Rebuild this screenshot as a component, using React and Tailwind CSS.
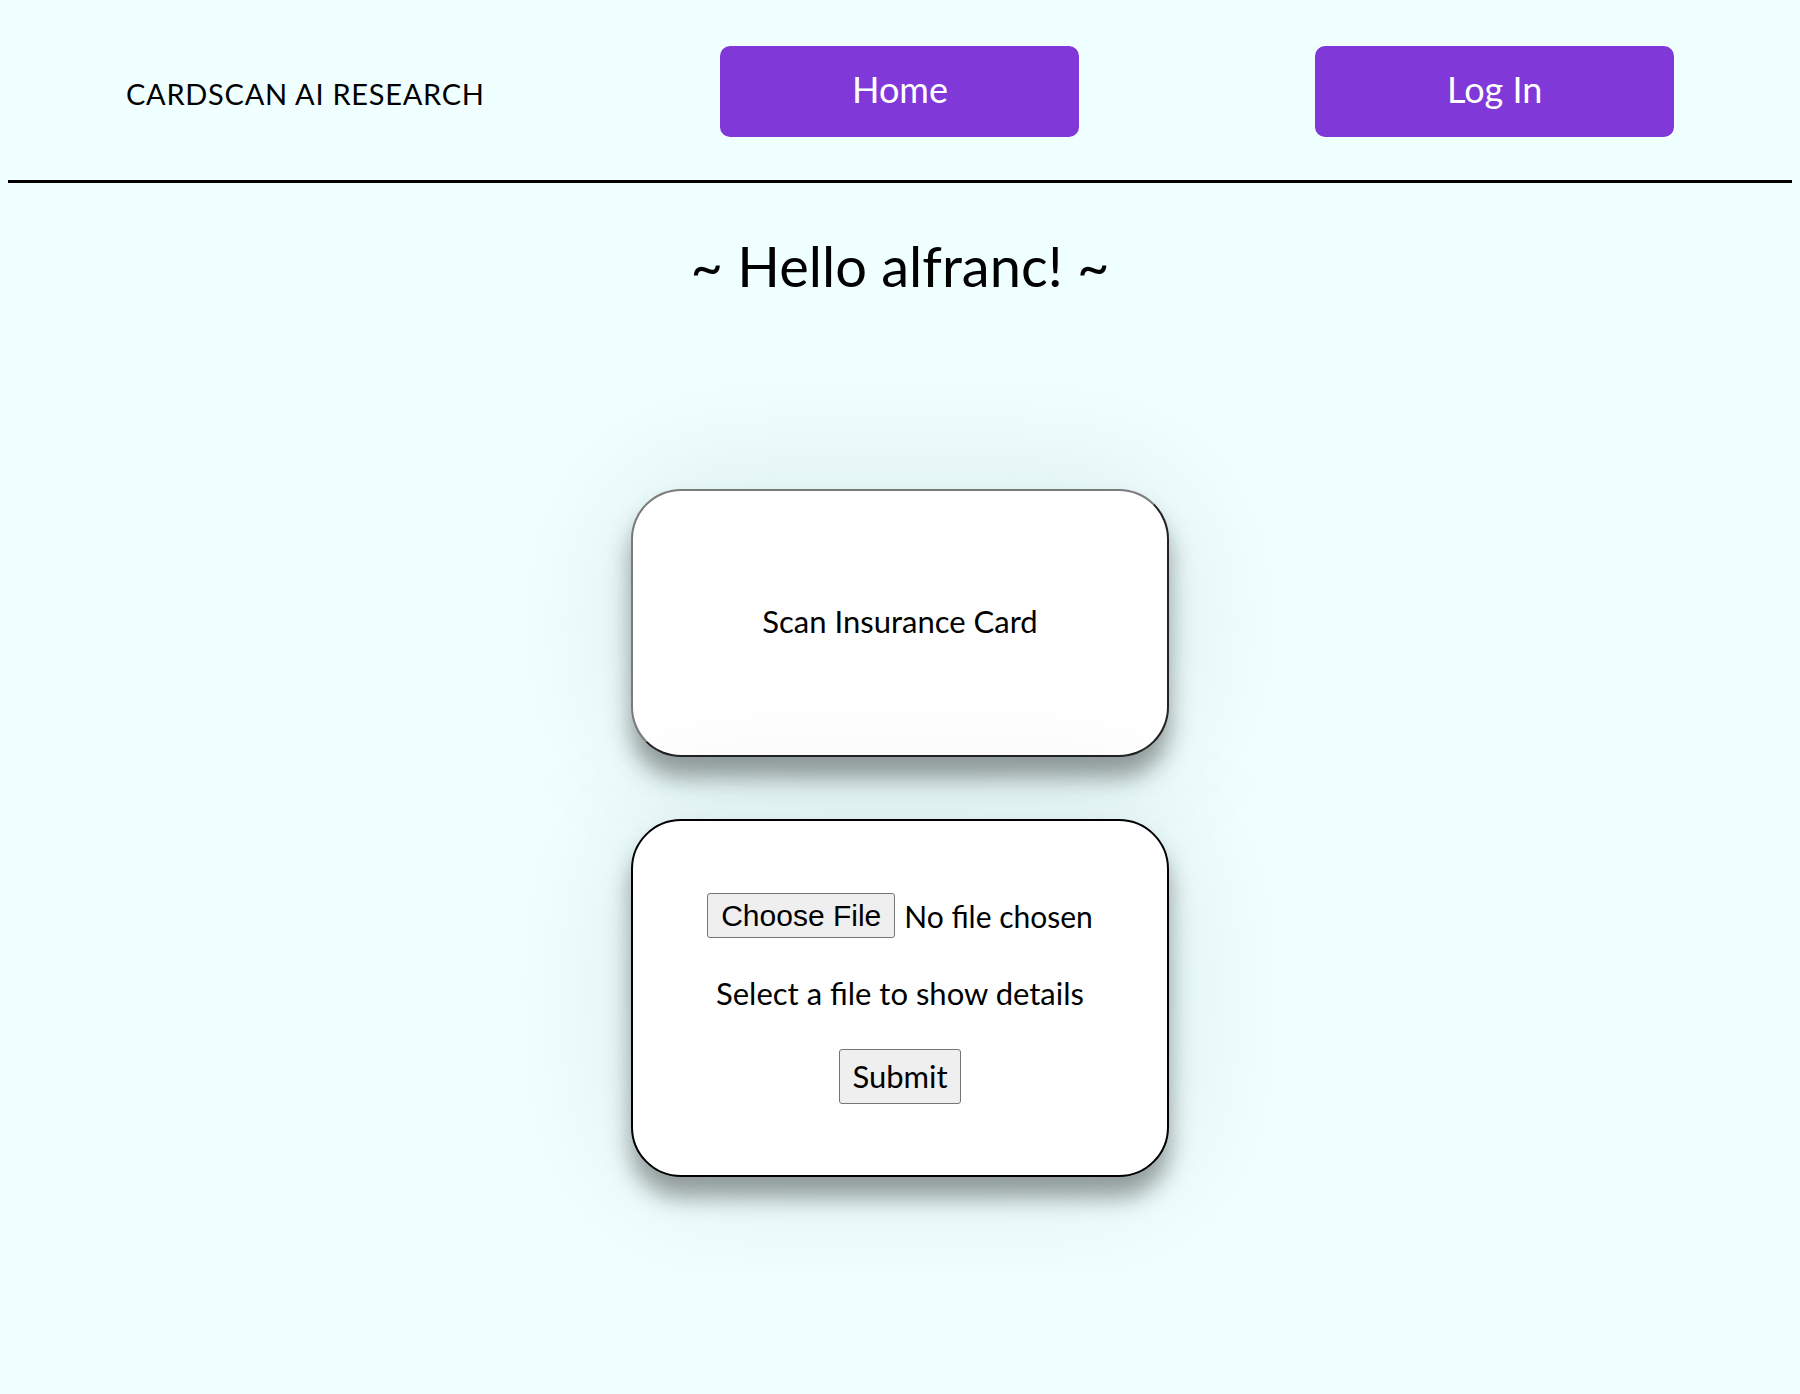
const font = "font-['Lato','Open_Sans',sans-serif]"

function NavButton({ children }) {
  return (
    <div className="flex justify-center">
      <button className="flex h-[91px] w-[359px] items-center justify-center rounded-[10px] bg-[#8038d9] pb-[6px] text-[36px] leading-none text-white">
        {children}
      </button>
    </div>
  )
}

const cardShadow = 'shadow-[0_20px_24px_rgba(0,0,0,0.38),0_0_150px_rgba(0,50,50,0.1)]'

export default function App() {
  return (
    <div className={`min-h-screen bg-[#f0ffff] p-2 text-black ${font}`}>
      <header className="grid grid-cols-3 items-center pb-[43px] pt-[38px]">
        <div className="flex justify-center">
          <span className="pt-[3px] text-[29px] leading-none tracking-[0.025em]">CARDSCAN AI RESEARCH</span>
        </div>
        <NavButton>Home</NavButton>
        <NavButton>Log In</NavButton>
      </header>
      <div className="h-[3px] bg-black" />

      <h1 className="mt-[55px] text-center text-[56px] leading-none">~ Hello alfranc! ~</h1>

      <div className={`mx-auto mt-[195px] flex h-[268px] w-[538px] items-center justify-center rounded-[50px] border-2 border-t-[#7a7a7a] border-l-[#7a7a7a] border-r-[#222] border-b-[#222] bg-white pb-[3px] ${cardShadow}`}>
        <p className="text-[31px] leading-none">Scan Insurance Card</p>
      </div>

      <div className={`mx-auto mt-[62px] flex h-[358px] w-[538px] flex-col items-center gap-10 rounded-[50px] border-2 border-black bg-white pt-[72px] ${cardShadow}`}>
        <div className="flex h-[45px] items-center gap-[9px]">
          <button className="h-[45px] rounded-[3px] border border-[#767676] bg-[#efefef] px-[13px] font-['Liberation_Sans',Arial,sans-serif] text-[30px] leading-none">
            Choose File
          </button>
          <span className="text-[30px] leading-none">No file chosen</span>
        </div>
        <p className="text-[31px] leading-none">Select a file to show details</p>
        <button className="h-[55px] w-[122px] rounded-[3px] border border-[#767676] bg-[#efefef] text-[31px] leading-none">
          Submit
        </button>
      </div>
    </div>
  )
}
